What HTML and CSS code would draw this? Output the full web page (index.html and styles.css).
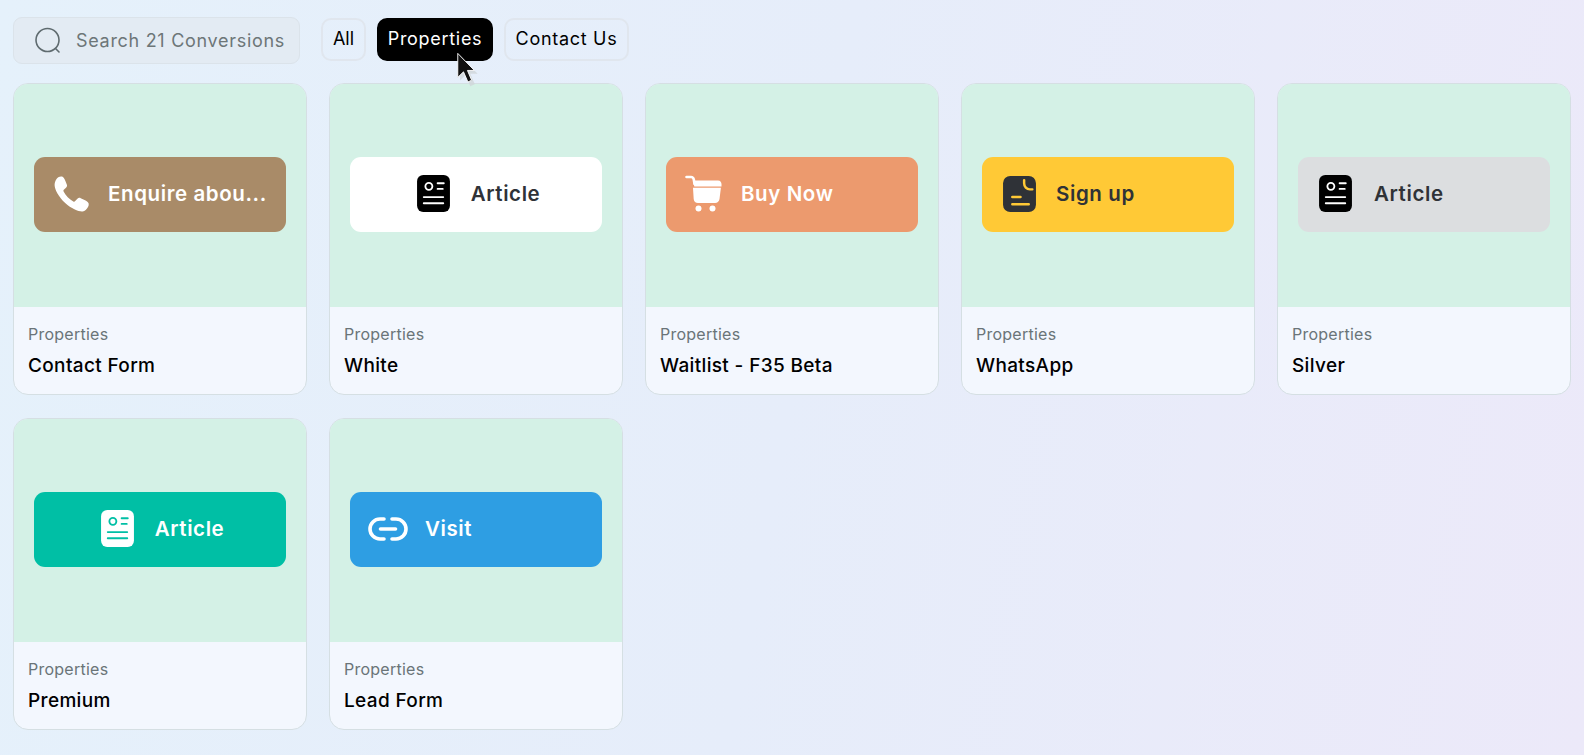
FILE: index.html
```html
<!DOCTYPE html>
<html lang="en">
<head>
<meta charset="utf-8">
<title>Conversions</title>
<link rel="stylesheet" href="styles.css">
</head>
<body>
<header class="toolbar">
  <div class="search">
    <svg class="search-icon" viewBox="0 0 28 28" fill="none" stroke="#5f6b6f" stroke-width="1.6" stroke-linecap="round"><circle cx="13.5" cy="13" r="11.5"/><path d="M21.5 21.5 L25 25"/></svg>
    <span class="search-text">Search 21 Conversions</span>
  </div>
  <nav class="chips">
    <span class="chip chip-all">All</span>
    <span class="chip chip-active">Properties</span>
    <span class="chip chip-contact">Contact Us</span>
  </nav>
</header>
<main class="grid">
  <article class="card">
    <div class="media"><div class="cta cta-brown cta-left">
      <svg class="ico ico-phone" viewBox="0 0 36 36"><path fill="#fff" d="M3.2 3.4 C4.4 1.4 7 0 9 .6 C10.4 1 11.4 2.6 12.4 5 L13.8 8.4 C14.3 9.7 14 10.8 13 11.7 L10.8 13.7 C10.3 14.2 10.2 14.8 10.6 15.5 C12.8 19.8 16.2 23.2 20.3 25.4 C21 25.8 21.6 25.7 22.2 25.1 L24.4 22.8 C25.3 21.8 26.5 21.6 27.7 22.2 L32.6 24.6 C34.8 25.7 36 27.2 35.7 29 C35.3 31.6 32.6 35.2 29.4 35.4 C25.6 35.6 18.4 32.8 12.2 27 C5.6 20.8 1.8 13.6 1.6 9.2 C1.5 7 2.2 5 3.2 3.4 Z"/></svg>
      <span class="cta-label cta-label-white">Enquire abou...</span>
    </div></div>
    <div class="info"><div class="cat">Properties</div><div class="name">Contact Form</div></div>
  </article>
  <article class="card">
    <div class="media"><div class="cta cta-white">
      <svg class="ico ico-doc" viewBox="0 0 32 36"><rect width="32" height="36" rx="6" fill="#000"/><circle cx="11.5" cy="11" r="3.4" fill="none" stroke="#fff" stroke-width="1.8"/><path d="M20 8h6M20 13.5h5M6.5 21.5h19M6.5 27.5h19" stroke="#fff" stroke-width="1.8" stroke-linecap="round"/></svg>
      <span class="cta-label cta-label-dark">Article</span>
    </div></div>
    <div class="info"><div class="cat">Properties</div><div class="name">White</div></div>
  </article>
  <article class="card">
    <div class="media"><div class="cta cta-orange cta-left">
      <svg class="ico ico-cart" viewBox="0 0 37 37"><path d="M1.5 2 H6 C7.5 2 8.5 3 8.8 4.5 L9.5 9" fill="none" stroke="#fff" stroke-width="2.6" stroke-linecap="round"/><path fill="#fff" d="M8 5.5 H33 C35.5 5.5 36.5 7.5 36.5 9.5 V11.5 H9.3 Z"/><path fill="#fff" d="M8 12.8 H35.9 L34.5 24 C34 26.8 32.3 28 30 28 H13 C10.5 28 9 26.5 8.7 24 Z"/><circle cx="13.5" cy="33.5" r="3" fill="#fff"/><circle cx="27.5" cy="33.5" r="3" fill="#fff"/></svg>
      <span class="cta-label cta-label-white">Buy Now</span>
    </div></div>
    <div class="info"><div class="cat">Properties</div><div class="name">Waitlist - F35 Beta</div></div>
  </article>
  <article class="card">
    <div class="media"><div class="cta cta-yellow cta-left">
      <svg class="ico ico-sign" viewBox="0 0 32 35"><rect width="32" height="35" rx="7" fill="#2f3237"/><path d="M20.5 4 V7 C20.5 10.5 23 13 26 13 H28.5" fill="none" stroke="#ffc936" stroke-width="2.4" stroke-linecap="round"/><path d="M9 20.5 H17 M9 27.5 H25" stroke="#ffc936" stroke-width="2.4" stroke-linecap="round"/></svg>
      <span class="cta-label cta-label-dark">Sign up</span>
    </div></div>
    <div class="info"><div class="cat">Properties</div><div class="name">WhatsApp</div></div>
  </article>
  <article class="card">
    <div class="media"><div class="cta cta-silver cta-left">
      <svg class="ico ico-doc" viewBox="0 0 32 36"><rect width="32" height="36" rx="6" fill="#000"/><circle cx="11.5" cy="11" r="3.4" fill="none" stroke="#fff" stroke-width="1.8"/><path d="M20 8h6M20 13.5h5M6.5 21.5h19M6.5 27.5h19" stroke="#fff" stroke-width="1.8" stroke-linecap="round"/></svg>
      <span class="cta-label cta-label-dark">Article</span>
    </div></div>
    <div class="info"><div class="cat">Properties</div><div class="name">Silver</div></div>
  </article>
  <article class="card">
    <div class="media"><div class="cta cta-teal">
      <svg class="ico ico-doc" viewBox="0 0 32 36"><rect width="32" height="36" rx="6" fill="#fff"/><circle cx="11.5" cy="11" r="3.4" fill="none" stroke="#00bfa5" stroke-width="1.8"/><path d="M20 8h6M20 13.5h5M6.5 21.5h19M6.5 27.5h19" stroke="#00bfa5" stroke-width="1.8" stroke-linecap="round"/></svg>
      <span class="cta-label cta-label-white">Article</span>
    </div></div>
    <div class="info"><div class="cat">Properties</div><div class="name">Premium</div></div>
  </article>
  <article class="card">
    <div class="media"><div class="cta cta-blue cta-left">
      <svg class="ico ico-link" viewBox="0 0 40 24" fill="none" stroke="#fff" stroke-width="3.6" stroke-linecap="round"><path d="M16 22 H12 A10 10 0 0 1 12 2 H16"/><path d="M24 2 H28 A10 10 0 0 1 28 22 H24"/><path d="M12.5 12 H27.5"/></svg>
      <span class="cta-label cta-label-white">Visit</span>
    </div></div>
    <div class="info"><div class="cat">Properties</div><div class="name">Lead Form</div></div>
  </article>
</main>
<svg class="cursor" viewBox="0 0 26 38"><path d="M4 2 V29 L10 23 L15 35 L20 33 L15 21.5 H23 Z" fill="#cfd6da" opacity=".8" transform="translate(1.5 1.5)"/><path d="M3 1 V27 L9.2 21 L14 32 L18 30 L13.5 19.5 H21 Z" fill="#111" stroke="#fff" stroke-width="1"/></svg>
</body>
</html>
```
FILE: styles.css
```css
* { box-sizing: border-box; }
html, body { height: 100%; }
body {
  margin: 0;
  height: 755px;
  overflow: hidden;
  position: relative;
  font-family: Inter, "Liberation Sans", sans-serif;
  background: linear-gradient(100deg, #e5f1fb 0%, #e6edfa 50%, #ece9f9 100%);
  color: #000;
}
.toolbar {
  display: flex;
  align-items: flex-start;
  padding: 17px 0 0 13px;
  height: 83px;
}
.search {
  width: 287px;
  height: 47px;
  display: flex;
  align-items: center;
  padding-left: 20px;
  background: #e3ebf3;
  border: 1px solid #dbe3ea;
  border-radius: 9px;
}
.search-icon { width: 28px; height: 28px; flex: none; }
.search-text {
  margin-left: 14px;
  font-size: 18px;
  letter-spacing: 0.7px;
  color: #6d7678;
  white-space: nowrap;
}
.chips {
  display: flex;
  gap: 11px;
  margin-left: 21px;
  margin-top: 1px;
}
.chip {
  height: 43px;
  display: flex;
  align-items: center;
  justify-content: center;
  padding-bottom: 2px;
  font-size: 18px;
  letter-spacing: 0.7px;
  color: #000;
  border: 2px solid #e0e6ee;
  border-radius: 10px;
  white-space: nowrap;
}
.chip-all { width: 45px; letter-spacing: 0; }
.chip-active { width: 116px; background: #000; border-color: #000; color: #fff; }
.chip-contact { width: 125px; }
.grid {
  display: grid;
  grid-template-columns: repeat(5, 294px);
  grid-auto-rows: 312px;
  gap: 23px 22px;
  padding-left: 13px;
}
.card {
  border: 1px solid #d5dfe3;
  border-radius: 15px;
  overflow: hidden;
  background: #f3f7fe;
  display: flex;
  flex-direction: column;
}
.media {
  height: 223px;
  flex: none;
  padding-bottom: 2px;
  background: #d4f1e6;
  display: flex;
  align-items: center;
  justify-content: center;
}
.cta {
  width: 252px;
  height: 75px;
  padding-bottom: 2px;
  border-radius: 11px;
  display: flex;
  align-items: center;
  justify-content: center;
  gap: 21px;
}
.cta-white, .cta-teal { padding-left: 5px; }
.cta-left { justify-content: flex-start; padding-left: 19px; }
.cta-brown { background: #a98b68; gap: 19px; }
.cta-white { background: #fff; }
.cta-orange { background: #ec9a6e; gap: 19px; }
.cta-yellow { background: #ffc936; padding-left: 21px; gap: 20px; }
.cta-silver { background: #dcdee0; padding-left: 21px; gap: 22px; }
.cta-teal { background: #00bfa5; }
.cta-blue { background: #2e9ee3; padding-left: 18px; gap: 17px; }
.cta-label {
  font-size: 20.5px;
  letter-spacing: 0.6px;
  font-weight: 600;
  white-space: nowrap;
}
.cta-label-white { color: #fff; }
.cta-label-dark { color: #2f3237; }
.ico { flex: none; display: block; }
.ico-phone { width: 36px; height: 36px; }
.ico-doc { width: 33px; height: 37px; }
.ico-cart { width: 37px; height: 37px; }
.ico-sign { width: 33px; height: 36px; }
.ico-link { width: 40px; height: 24px; }
.info { padding: 17px 14px 0 14px; }
.cat {
  font-size: 16px;
  letter-spacing: 0.25px;
  line-height: 21px;
  color: #6a7478;
}
.name {
  margin-top: 9px;
  font-size: 19px;
  letter-spacing: 0.35px;
  line-height: 24px;
  font-weight: 500;
  color: #000;
}
.cursor {
  position: absolute;
  left: 455px;
  top: 52px;
  width: 24px;
  height: 36px;
}
```
